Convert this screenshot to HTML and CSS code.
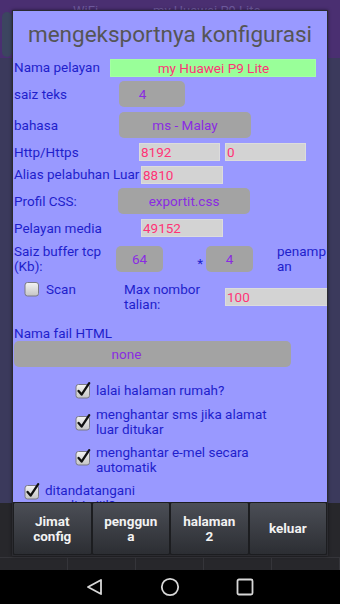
FILE: index.html
```html
<!DOCTYPE html>
<html lang="ms">
<head>
  <meta charset="UTF-8">
  <meta name="viewport" content="width=device-width, initial-scale=1.0">
  <title>mengeksportnya konfigurasi</title>
  <link rel="stylesheet" href="styles.css">
</head>
<body>
  <div class="screen">
    <div class="app">
      <div class="app-bar">
        <span class="app-tab"></span>
        <span class="app-text wifi">WiFi</span>
        <span class="app-text host">my Huawei P9 Lite</span>
      </div>
      <div class="app-body"></div>
      <div class="app-foot">
        <div class="foot-cells"><span></span><span></span><span></span><span></span><span></span></div>
      </div>
    </div>

    <nav class="nav">
      <span class="nav-btn">
        <svg width="18" height="18" viewBox="0 0 18 18"><path d="M15 2 L2 9 L15 16 Z" fill="none" stroke="#d8d8d8" stroke-width="1.8" stroke-linejoin="round"/></svg>
      </span>
      <span class="nav-btn">
        <svg width="20" height="20" viewBox="0 0 20 20"><circle cx="10" cy="10" r="8.2" fill="none" stroke="#d8d8d8" stroke-width="1.8"/></svg>
      </span>
      <span class="nav-btn">
        <svg width="18" height="18" viewBox="0 0 18 18"><rect x="1.5" y="1.5" width="15" height="15" rx="1.5" fill="none" stroke="#d8d8d8" stroke-width="1.8"/></svg>
      </span>
    </nav>

    <div class="dialog">
      <h1 class="dialog-title">mengeksportnya konfigurasi</h1>

      <div class="dialog-body">
        <div class="row r-name">
          <span class="lbl">Nama pelayan</span>
          <span class="field green">my Huawei P9 Lite</span>
        </div>
        <div class="row r-size">
          <span class="lbl">saiz teks</span>
          <span class="btn spin">4</span>
        </div>
        <div class="row r-lang">
          <span class="lbl">bahasa</span>
          <span class="btn">ms - Malay</span>
        </div>
        <div class="row r-http">
          <span class="lbl">Http/Https</span>
          <span class="field">8192</span>
          <span class="field">0</span>
        </div>
        <div class="row r-alias">
          <span class="lbl">Alias pelabuhan Luar</span>
          <span class="field">8810</span>
        </div>
        <div class="row r-css">
          <span class="lbl">Profil CSS:</span>
          <span class="btn">exportit.css</span>
        </div>
        <div class="row r-media">
          <span class="lbl">Pelayan media</span>
          <span class="field">49152</span>
        </div>
        <div class="row r-tcp">
          <span class="lbl">Saiz buffer tcp<br>(Kb):</span>
          <span class="btn">64</span>
          <span class="star">*</span>
          <span class="btn">4</span>
          <span class="tail">penamp<br>an</span>
        </div>
        <div class="row r-scan">
          <span class="scan">
            <svg class="cb" width="16" height="17" viewBox="0 0 16 17">
              <defs><linearGradient id="cbg" x1="0" y1="0" x2="0" y2="1"><stop offset="0" stop-color="#f4f4f4"/><stop offset="1" stop-color="#c4c4c4"/></linearGradient></defs>
              <rect x="1" y="2.5" width="13.5" height="13.5" rx="2.5" fill="url(#cbg)" stroke="#7a7a86" stroke-width="1"/>
            </svg>
            <span>Scan</span>
          </span>
          <span class="max-lbl">Max nombor<br>talian:</span>
          <span class="field wide">100</span>
        </div>
        <div class="row r-html">
          <span class="lbl">Nama fail HTML</span>
        </div>
        <div class="row r-none">
          <span class="btn">none</span>
        </div>

        <div class="checks">
          <div class="check indent">
            <svg class="cb" width="16" height="17" viewBox="0 0 16 17">
              <rect x="1" y="2.5" width="13.5" height="13.5" rx="2.5" fill="url(#cbg)" stroke="#7a7a86" stroke-width="1"/>
              <path d="M3.6 9 L6.6 12.6 L14.2 1.2" fill="none" stroke="#111" stroke-width="2.3" stroke-linecap="round" stroke-linejoin="round"/>
            </svg>
            <span class="check-text">lalai halaman rumah?</span>
          </div>
          <div class="check indent">
            <svg class="cb" width="16" height="17" viewBox="0 0 16 17">
              <rect x="1" y="2.5" width="13.5" height="13.5" rx="2.5" fill="url(#cbg)" stroke="#7a7a86" stroke-width="1"/>
              <path d="M3.6 9 L6.6 12.6 L14.2 1.2" fill="none" stroke="#111" stroke-width="2.3" stroke-linecap="round" stroke-linejoin="round"/>
            </svg>
            <span class="check-text">menghantar sms jika alamat luar ditukar</span>
          </div>
          <div class="check indent">
            <svg class="cb raised" width="16" height="17" viewBox="0 0 16 17">
              <rect x="1" y="2.5" width="13.5" height="13.5" rx="2.5" fill="url(#cbg)" stroke="#7a7a86" stroke-width="1"/>
              <path d="M3.6 9 L6.6 12.6 L14.2 1.2" fill="none" stroke="#111" stroke-width="2.3" stroke-linecap="round" stroke-linejoin="round"/>
            </svg>
            <span class="check-text">menghantar e-mel secara automatik</span>
          </div>
          <div class="check top">
            <svg class="cb" width="16" height="17" viewBox="0 0 16 17">
              <rect x="1" y="2.5" width="13.5" height="13.5" rx="2.5" fill="url(#cbg)" stroke="#7a7a86" stroke-width="1"/>
              <path d="M3.6 9 L6.6 12.6 L14.2 1.2" fill="none" stroke="#111" stroke-width="2.3" stroke-linecap="round" stroke-linejoin="round"/>
            </svg>
            <span class="check-text narrow">ditandatangani sendiri sijil?</span>
          </div>
        </div>
      </div>

      <div class="dialog-buttons">
        <button class="dbtn">Jimat<br>config</button>
        <button class="dbtn">penggun<br>a</button>
        <button class="dbtn">halaman<br>2</button>
        <button class="dbtn">keluar</button>
      </div>
    </div>
  </div>
</body>
</html>
```

FILE: styles.css
```css
body {
  margin: 0;
  background-color: #000;
  font-family: Roboto, "Noto Sans", sans-serif;
}

.screen {
  position: relative;
  width: 340px;
  height: 604px;
  display: flex;
  flex-direction: column;
  overflow: hidden;
}

/* app behind the dialog */
.app {
  flex: 1;
  display: flex;
  flex-direction: column;
}

.app-bar {
  height: 58px;
  background-color: #4a2f71;
  display: flex;
  align-items: flex-start;
  flex: none;
}

.app-tab {
  width: 10px;
  height: 45px;
  margin: 12px 0 0 2px;
  background-color: #3c4560;
  border-radius: 6px;
}

.app-text {
  color: #6d5a9c;
  font-size: 13px;
  line-height: 13px;
  margin-top: 4px;
}

.wifi {
  margin-left: 61px;
}

.host {
  margin-left: 55px;
}

.app-body {
  flex: 1;
  background-color: #3b3a5c;
}

.app-foot {
  height: 67px;
  flex: none;
  background-color: #27272b;
  display: flex;
  flex-direction: column;
  justify-content: flex-end;
}

.foot-cells {
  height: 12px;
  display: flex;
  border-top: 1px solid #35353a;
}

.foot-cells span {
  flex: 1;
  border-right: 1px solid #35353a;
}

.nav {
  height: 34px;
  flex: none;
  background-color: #000;
  display: flex;
  justify-content: center;
  align-items: center;
}

.nav-btn {
  width: 75px;
  display: flex;
  justify-content: center;
}

/* dialog */
.dialog {
  position: absolute;
  top: 10px;
  left: 12px;
  width: 316px;
  height: 546px;
  box-sizing: border-box;
  border: 1px solid #2b2b30;
  background-color: #9999ff;
  display: flex;
  flex-direction: column;
  box-shadow: 0 0 3px rgba(0, 0, 0, 0.5);
}

.dialog-title {
  height: 46px;
  margin: 0;
  flex: none;
  font-size: 22.5px;
  font-weight: normal;
  line-height: 46px;
  text-align: center;
  color: #555555;
}

.dialog-body {
  flex: 1;
  overflow: hidden;
  padding-left: 1px;
  font-size: 13.5px;
  color: #1f1fcc;
}

.row {
  display: flex;
  align-items: center;
}

.lbl {
  flex: none;
  line-height: 15px;
  white-space: nowrap;
}

.field {
  flex: none;
  height: 18px;
  box-sizing: border-box;
  background-color: #d3d3d3;
  border: 1px solid #dcdcdc;
  color: #ff3377;
  line-height: 16px;
  padding-left: 1px;
  white-space: nowrap;
}

.field.green {
  width: 206px;
  background-color: #99ff99;
  border-color: #a4ffa4;
  text-align: center;
}

.btn {
  flex: none;
  height: 26px;
  box-sizing: border-box;
  background-color: #a3a3a3;
  border-radius: 5px;
  color: #8a2be2;
  text-align: center;
  line-height: 26px;
}

.r-name { height: 21px; }
.r-name .lbl { width: 96px; }

.r-size { height: 32px; }
.r-size .lbl { width: 105px; }
.r-size .btn { width: 66px; padding-right: 19px; }

.r-lang { height: 30px; }
.r-lang .lbl { width: 105px; }
.r-lang .btn { width: 132px; }

.r-http { height: 24px; gap: 5px; }
.r-http .lbl { width: 120px; }
.r-http .field { width: 81px; }

.r-alias { height: 21px; }
.r-alias .lbl { width: 127px; }
.r-alias .field { width: 82px; }

.r-css { height: 32px; }
.r-css .lbl { width: 104px; }
.r-css .btn { width: 132px; }

.r-media { height: 22px; }
.r-media .lbl { width: 127px; }
.r-media .field { width: 82px; }

.r-tcp { height: 40px; }
.r-tcp .lbl { width: 102px; }
.r-tcp .btn { width: 47px; }

.star {
  width: 43px;
  flex: none;
  box-sizing: border-box;
  padding: 8px 3px 0 0;
  text-align: right;
  color: #1f1fcc;
}

.tail {
  margin-left: 24px;
  line-height: 15px;
  white-space: nowrap;
}

.r-scan {
  height: 34px;
  align-items: flex-start;
}

.scan {
  width: 110px;
  flex: none;
  display: flex;
  align-items: center;
  gap: 6px;
  padding: 1px 0 0 10px;
  box-sizing: border-box;
  line-height: 16px;
}

.max-lbl {
  width: 101px;
  flex: none;
  margin-top: 3px;
  line-height: 15px;
}

.field.wide {
  width: 110px;
  margin-top: 9px;
}

.r-html {
  height: 28px;
  align-items: flex-end;
}

.r-html .lbl {
  line-height: 16px;
}

.r-none { height: 26px; }
.r-none .btn { width: 277px; padding-right: 52px; }

.checks {
  padding-top: 11px;
}

.check {
  display: flex;
  align-items: center;
  gap: 5px;
  padding: 4px 0;
}

.check.indent {
  padding-left: 61px;
}

.check.top {
  padding-left: 10px;
  align-items: flex-start;
}

.cb {
  flex: none;
}

.cb.raised {
  margin-top: -6px;
}

.check-text {
  width: 175px;
  line-height: 15px;
}

.check-text.narrow {
  width: 100px;
}

.dialog-buttons {
  height: 53px;
  flex: none;
  display: flex;
  background-color: #222226;
}

.dbtn {
  flex: 1;
  margin: 0;
  border: 1px solid #1c1d20;
  border-radius: 2px;
  background: linear-gradient(#4b4e56, #2c2e33);
  color: #f2f2f2;
  font-family: Roboto, "Noto Sans", sans-serif;
  font-size: 13.5px;
  font-weight: bold;
  line-height: 15px;
  padding: 0;
}
```
